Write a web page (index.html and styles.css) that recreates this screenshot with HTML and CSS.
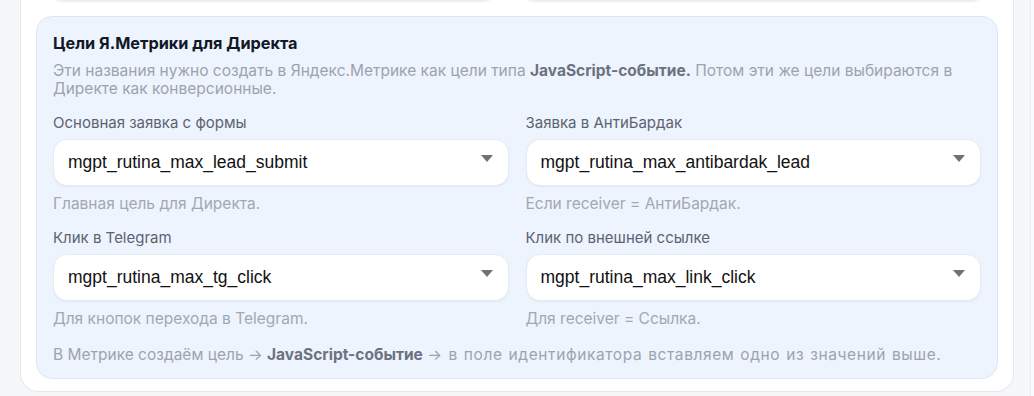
FILE: index.html
```html
<!DOCTYPE html>
<html lang="ru">
<head>
<meta charset="utf-8">
<link rel="stylesheet" href="styles.css">
</head>
<body>
<div class="page">
  <div class="card">
    <div class="prev-row">
      <div class="prev-field prev-left"></div>
      <div class="prev-field prev-right"></div>
    </div>
    <section class="goals">
      <h3 class="goals-title">Цели Я.Метрики для Директа</h3>
      <p class="goals-desc">Эти названия нужно создать в Яндекс.Метрике как цели типа <b>JavaScript-событие.</b> Потом эти же цели выбираются в Директе как конверсионные.</p>
      <div class="grid">
        <div class="field">
          <div class="label">Основная заявка с формы</div>
          <div class="select"><span>mgpt_rutina_max_lead_submit</span><i class="arrow"></i></div>
          <div class="hint">Главная цель для Директа.</div>
        </div>
        <div class="field">
          <div class="label">Заявка в АнтиБардак</div>
          <div class="select"><span>mgpt_rutina_max_antibardak_lead</span><i class="arrow"></i></div>
          <div class="hint">Если receiver = АнтиБардак.</div>
        </div>
        <div class="field">
          <div class="label">Клик в Telegram</div>
          <div class="select"><span>mgpt_rutina_max_tg_click</span><i class="arrow"></i></div>
          <div class="hint">Для кнопок перехода в Telegram.</div>
        </div>
        <div class="field">
          <div class="label">Клик по внешней ссылке</div>
          <div class="select"><span>mgpt_rutina_max_link_click</span><i class="arrow"></i></div>
          <div class="hint">Для receiver = Ссылка.</div>
        </div>
      </div>
      <p class="goals-note">В Метрике создаём цель → <b>JavaScript-событие</b> <span class="tail">→ в поле идентификатора вставляем одно из значений выше.</span></p>
    </section>
  </div>
  <div class="scroll-rail"></div>
</div>
</body>
</html>
```

FILE: styles.css
```css
* { box-sizing: border-box; }
html, body { margin: 0; padding: 0; }
body {
  background: #f6f7f9;
  font-family: Inter, "Noto Sans", sans-serif;
  height: 396px;
  overflow: hidden;
}
.page {
  display: flex;
  padding-left: 20px;
  height: 396px;
}
.card {
  width: 994px;
  background: #ffffff;
  border: 1px solid #e5e8ed;
  border-top: none;
  border-radius: 0 0 18px 18px;
  padding: 0 15px 12px 15px;
  align-self: flex-start;
}
.scroll-rail {
  margin-left: 16px;
  width: 4px;
  border-left: 1px solid #e9ebef;
  background: #f9fafb;
  height: 396px;
}
.prev-row {
  display: flex;
  height: 30px;
  margin-top: -30px;
  padding-left: 12px;
}
.prev-field {
  height: 30px;
  background: #fff;
  border-radius: 0 0 14px 14px;
  box-shadow: 0 1px 3px rgba(0,0,0,0.12);
}
.prev-left { width: 449px; }
.prev-right { width: 466px; margin-left: 23px; }

.goals {
  margin-top: 16px;
  background: #eef4fd;
  border: 1px solid #dde7f4;
  border-radius: 16px;
  padding: 16px 16px 14px 16px;
}
.goals-title {
  margin: 0;
  font-weight: 700;
  font-size: 16.3px;
  line-height: 20px;
  color: #111827;
}
.goals-desc {
  margin: 9px 0 0 0;
  font-size: 15.5px;
  line-height: 18px;
  color: #9ca3af;
}
.goals-desc b, .goals-note b {
  color: #6b7280;
  font-weight: 700;
}
.grid {
  margin-top: 16px;
  display: grid;
  grid-template-columns: 1fr 1fr;
  column-gap: 17px;
  row-gap: 16px;
}
.label {
  font-size: 15px;
  line-height: 18px;
  color: #5b6370;
}
.select {
  margin-top: 7px;
  height: 47px;
  background: #fff;
  border: 1px solid #e6ebf2;
  border-radius: 14px;
  box-shadow: 0 1px 2px rgba(15,23,42,0.05);
  display: flex;
  align-items: center;
  justify-content: space-between;
  padding: 0 15px 0 14px;
  font-family: "Liberation Sans", Arial, sans-serif;
  font-size: 17.5px;
  color: #111;
}
.arrow {
  width: 0;
  height: 0;
  border-left: 6px solid transparent;
  border-right: 6px solid transparent;
  border-top: 7px solid #6e7177;
  margin-top: -8px;
}
.hint {
  margin-top: 9px;
  font-size: 15.5px;
  line-height: 18px;
  color: #a1a8b3;
}
.goals-note {
  margin: 18px 0 0 0;
  font-size: 15.5px;
  line-height: 18px;
  color: #9ca3af;
}
.goals-note .tail {
  letter-spacing: 0.6px;
  word-spacing: 1px;
}
```
